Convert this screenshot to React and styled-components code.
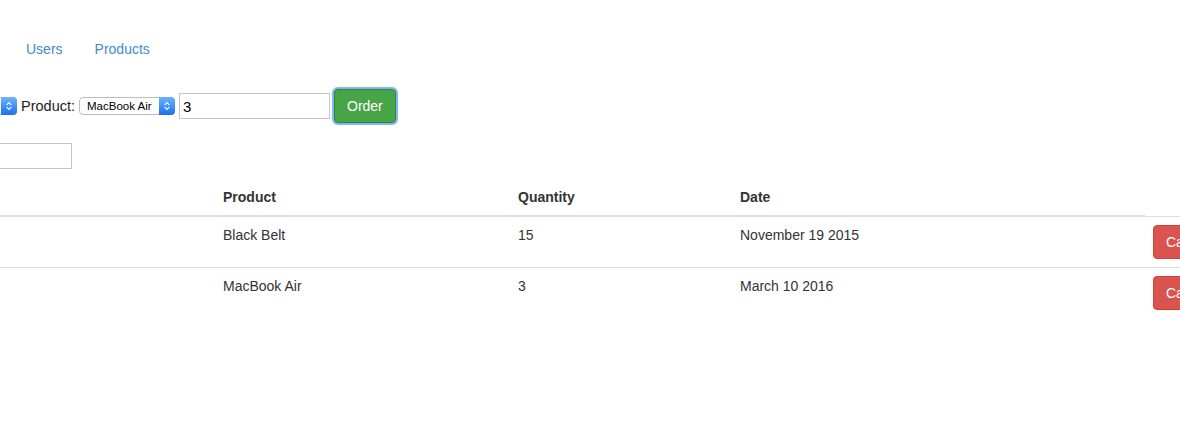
import React from "react";
import styled, { createGlobalStyle } from "styled-components";

const GlobalStyle = createGlobalStyle`
  html, body {
    margin: 0;
    padding: 0;
    overflow: hidden;
    background: #fff;
  }
  body {
    font-family: "Liberation Sans", Arial, sans-serif;
    font-size: 14px;
    line-height: 20px;
    color: #333;
  }
`;

const Page = styled.div`
  padding-top: 29px;
`;

const Nav = styled.ul`
  list-style: none;
  display: flex;
  margin: 0 0 0 11px;
  padding: 0;
`;

const NavItem = styled.li`
  & + & {
    margin-left: 2px;
  }
`;

const NavLink = styled.a`
  display: block;
  padding: 10px 15px;
  line-height: 20px;
  color: #428bca;
  text-decoration: none;
  cursor: pointer;
`;

const FormRow = styled.div`
  display: flex;
  align-items: center;
  height: 34px;
  margin-top: 20px;
`;

const Label = styled.label`
  margin-left: 4px;
  font-size: 14.5px;
  color: #222;
`;

const SelectBox = styled.span`
  position: relative;
  display: inline-flex;
  flex-shrink: 0;
  width: ${(p) => p.$width}px;
  height: 18px;
  margin-left: ${(p) => p.$offset}px;
`;

const NativeSelect = styled.select`
  appearance: none;
  -webkit-appearance: none;
  width: 100%;
  height: 100%;
  margin: 0;
  padding: 0 20px 0 7px;
  border: 1px solid #bdbdbd;
  border-radius: 4px;
  background: #fff;
  font-family: "Liberation Sans", Arial, sans-serif;
  font-size: 11.5px;
  color: #000;
  outline: none;
`;

const Cap = styled.span`
  position: absolute;
  top: 0;
  right: 0;
  bottom: 0;
  width: 16px;
  border-radius: 0 4px 4px 0;
  background: linear-gradient(#6fb3fc, #1c6ff2);
  display: flex;
  align-items: center;
  justify-content: center;
  pointer-events: none;
`;

const TextInput = styled.input`
  box-sizing: border-box;
  flex-shrink: 0;
  width: ${(p) => p.$width}px;
  height: 26px;
  margin: 0 0 0 ${(p) => p.$offset}px;
  padding: 0 3px;
  border: 1px solid #c6c6c6;
  font-family: "Liberation Sans", Arial, sans-serif;
  font-size: 15px;
  color: #000;
  outline: none;
  display: block;
`;

const Button = styled.button`
  box-sizing: border-box;
  height: 34px;
  padding: 6px 12px;
  border: 1px solid ${(p) => (p.$variant === "danger" ? "#d43f3a" : "#398439")};
  border-radius: 4px;
  background: ${(p) => (p.$variant === "danger" ? "#d9534f" : "#47a447")};
  color: #fff;
  font-family: "Liberation Sans", Arial, sans-serif;
  font-size: 14px;
  line-height: 20px;
  white-space: nowrap;
  cursor: pointer;
  margin-left: ${(p) => p.$offset || 0}px;
  box-shadow: ${(p) => (p.$focused ? "0 0 1px 2px #7fb2f3" : "none")};
`;

const SearchRow = styled.div`
  margin-top: 20px;
`;

const Table = styled.table`
  margin-top: 10px;
  width: 1240px;
  table-layout: fixed;
  border-collapse: collapse;
  border-spacing: 0;
`;

const Col = styled.col`
  width: ${(p) => p.$width}px;
`;

const Th = styled.th`
  padding: 8px;
  text-align: left;
  font-weight: bold;
  vertical-align: bottom;
  border-bottom: 2px solid #ddd;
`;

const Td = styled.td`
  padding: 8px;
  vertical-align: top;
  border-top: 1px solid #ddd;
  white-space: nowrap;
`;

const Chevrons = () => (
  <svg width="8" height="12" viewBox="0 0 8 12" fill="none">
    <path d="M2 4.6 L4 2.6 L6 4.6" stroke="#fff" strokeWidth="1.2" strokeLinecap="round" strokeLinejoin="round" />
    <path d="M2 7.4 L4 9.4 L6 7.4" stroke="#fff" strokeWidth="1.2" strokeLinecap="round" strokeLinejoin="round" />
  </svg>
);

const Select = ({ width, offset = 0, value, options }) => (
  <SelectBox $width={width} $offset={offset}>
    <NativeSelect defaultValue={value}>
      {options.map((o) => (
        <option key={o}>{o}</option>
      ))}
    </NativeSelect>
    <Cap>
      <Chevrons />
    </Cap>
  </SelectBox>
);

const orders = [
  { product: "Black Belt", quantity: 15, date: "November 19 2015" },
  { product: "MacBook Air", quantity: 3, date: "March 10 2016" },
];

const App = () => {
  return (
    <Page>
      <GlobalStyle />
      <Nav>
        <NavItem>
          <NavLink>Users</NavLink>
        </NavItem>
        <NavItem>
          <NavLink>Products</NavLink>
        </NavItem>
      </Nav>

      <FormRow>
        <Select width={80} offset={-63} value="" options={[""]} />
        <Label>Product:</Label>
        <Select width={96} offset={4} value="MacBook Air" options={["Black Belt", "MacBook Air"]} />
        <TextInput $width={151} $offset={4} defaultValue="3" />
        <Button $focused $offset={4}>Order</Button>
      </FormRow>

      <SearchRow>
        <TextInput $width={150} $offset={-78} />
      </SearchRow>

      <Table>
        <colgroup>
          <Col $width={215} />
          <Col $width={295} />
          <Col $width={222} />
          <Col $width={413} />
          <Col $width={95} />
        </colgroup>
        <thead>
          <tr>
            <Th />
            <Th>Product</Th>
            <Th>Quantity</Th>
            <Th>Date</Th>
          </tr>
        </thead>
        <tbody>
          {orders.map((o) => (
            <tr key={o.date}>
              <Td />
              <Td>{o.product}</Td>
              <Td>{o.quantity}</Td>
              <Td>{o.date}</Td>
              <Td>
                <Button $variant="danger">Cancel</Button>
              </Td>
            </tr>
          ))}
        </tbody>
      </Table>
    </Page>
  );
};

export default App;
